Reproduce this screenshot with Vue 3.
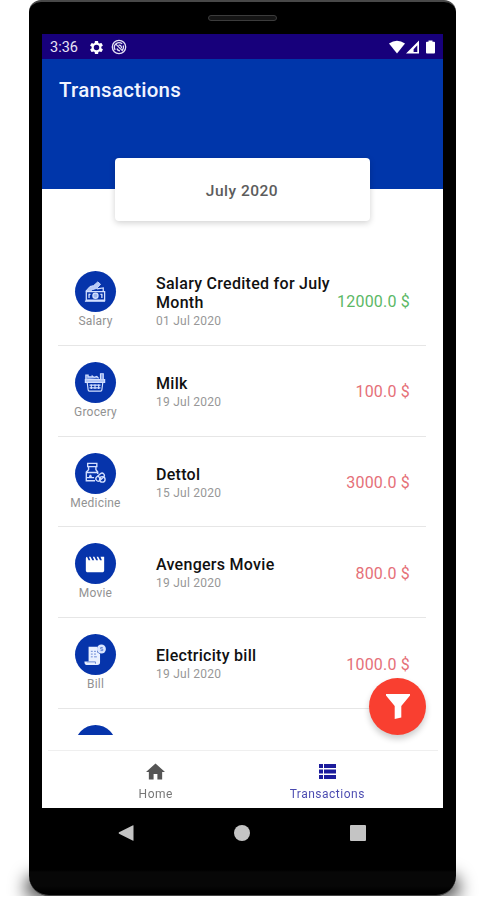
<script setup>
import { ref } from 'vue';

const activeTab = ref('transactions');
const month = ref('July 2020');

const transactions = ref([
  { id: 1, category: 'Salary', title: 'Salary Credited for July Month', date: '01 Jul 2020', amount: '12000.0 $', income: true },
  { id: 2, category: 'Grocery', title: 'Milk', date: '19 Jul 2020', amount: '100.0 $' },
  { id: 3, category: 'Medicine', title: 'Dettol', date: '15 Jul 2020', amount: '3000.0 $' },
  { id: 4, category: 'Movie', title: 'Avengers Movie', date: '19 Jul 2020', amount: '800.0 $' },
  { id: 5, category: 'Bill', title: 'Electricity bill', date: '19 Jul 2020', amount: '1000.0 $' },
  { id: 6 },
]);
</script>

<template>
  <main class="stage">
    <div class="phone-shadow"></div>
    <div class="phone">
      <div class="top-bezel"><span class="speaker"></span></div>

      <div class="screen">
        <div class="status-bar">
          <span class="clock">3:36</span>
          <svg class="status-gear" viewBox="2 2 20 20">
            <path fill="#fff" fill-rule="evenodd" d="M19.4 13a7.500 7.500 0 0 0 0-2l2.100-1.650a.5.5 0 0 0 .12-.64l-2-3.460a.5.5 0 0 0-.61-.22l-2.490 1a7.300 7.300 0 0 0-1.690-.98l-.38-2.650A.5.5 0 0 0 14 2h-4a.5.5 0 0 0-.49.42l-.38 2.650c-.61.25-1.170.59-1.690.98l-2.490-1a.5.5 0 0 0-.61.22l-2 3.460a.5.5 0 0 0 .12.64L4.600 11a7.500 7.500 0 0 0 0 2l-2.110 1.650a.5.5 0 0 0-.12.64l2 3.460c.12.22.39.3.61.22l2.490-1c.52.4 1.080.73 1.690.98l.38 2.650c.03.24.24.42.49.42h4c.25 0 .46-.18.49-.42l.38-2.650c.61-.25 1.170-.59 1.690-.98l2.490 1c.23.09.49 0 .61-.22l2-3.460a.5.5 0 0 0-.12-.64zM12 16.200a4.200 4.200 0 1 1 0-8.400 4.200 4.200 0 0 1 0 8.400z" />
          </svg>
          <svg class="status-app" viewBox="0 0 16 16" fill="none" stroke="#e6e2f5">
            <circle cx="8" cy="8" r="6.700" stroke-width="1.300" />
            <path d="M4.200 11a4.600 4.600 0 0 1 0-5.500q3-3.500 7 -.8M12.300 6.500q.8 3-1.300 5M4.800 5.200l7 7M6 9.500q.5 2.300 3 2.300M7.500 6.300q3-.6 3 3" stroke-width="1.200" />
          </svg>
          <svg class="status-right" viewBox="0 0 46 15">
            <path fill="#fff" d="M0 3.600Q8 -2.200 16 3.600L8 13.400z" />
            <path fill="#fff" fill-rule="evenodd" d="M30 .6V13.500H17zM28.300 5.300l-3.700 3.900v2.700h3.700z" />
            <path fill="#fff" d="M39.500 .5h4v1.200h1.600q.9 0 .9.9v10q0 .9-.9.9h-7.200q-.9 0-.9-.9v-10q0-.9.9-.9h1.600z" />
          </svg>
        </div>

        <header class="header">
          <h1 class="title">Transactions</h1>
        </header>

        <button class="month-card">{{ month }}</button>

        <section class="list">
          <article v-for="item in transactions" :key="item.id" class="row">
            <div class="category">
              <div class="badge">
                <svg v-if="item.category === 'Salary'" viewBox="0 0 24 24" fill="none" stroke="#d3e0ff" stroke-width="1.400">
                  <path d="M2.500 11.500h20v9.500h-20z" />
                  <path d="M1 22h22" />
                  <circle cx="12.500" cy="16" r="2.800" fill="#9db7ef" />
                  <path d="M5.500 14v4.500M19.500 14v4.500M7 14l-2 2M18 14l2 2" />
                  <path d="M2 11l4.500-5 4-1 4.500-4 3 2.500-4 4.500-5 1.500-2.500 2z" fill="#b7caf6" stroke-width="1" />
                  <path d="M14 8.500l7-1v3.500" />
                </svg>
                <svg v-else-if="item.category === 'Grocery'" viewBox="0 0 24 24" fill="none" stroke="#d3e0ff" stroke-width="1.300">
                  <path d="M1.500 9.500h21v3h-21z" fill="#a8bff2" />
                  <path d="M3.500 12.500l1 8q0 1.500 1.500 1.500h12q1.500 0 1.500-1.500l1-8M6 15.500h12M6 18.500h12M8 14.500v5M12 14.500v5M16 14.500v5" />
                  <path d="M2 9V4.500h2.500v2H9V5.500l2 1.500 3-1 2 2M18 9V3h3v6" fill="#7d9ce4" />
                </svg>
                <svg v-else-if="item.category === 'Medicine'" viewBox="0 0 24 24" fill="none" stroke="#d3e0ff" stroke-width="1.500">
                  <path d="M4 1.500h10v3.500H4zM5 5v3.500L2.500 11v9.500h9.500M13 5v3.500l2 2.500v2M2.500 11.500H15" />
                  <path d="M2.500 17H11M7 14v3M5.500 15.500h3" />
                  <rect x="12.500" y="14.500" width="10.500" height="5" rx="2.500" transform="rotate(-42 17 17)" />
                  <path d="M15 15l4 4" />
                  <circle cx="20" cy="19" r="3" />
                </svg>
                <svg v-else-if="item.category === 'Movie'" viewBox="0 0 24 24">
                  <path fill="#fff" d="M18 4l1.500 4h-2l-2-4h-1.700l1.500 4h-2l-2-4H9.600l1.500 4h-2l-2-4H5.400l1.500 4H5L3.300 4Q2 4.200 2 6v13c0 1.100.9 2 2 2h16c1.100 0 2-.9 2-2V4z" />
                </svg>
                <svg v-else-if="item.category === 'Bill'" viewBox="0 0 24 24">
                  <path fill="#e9f0ff" d="M5 3h9.500v6l3 2V20q0 3-3 3H4q-3.500 0-3.500-3.500v-.5H5z" />
                  <circle cx="19" cy="5.500" r="4.900" fill="#dbe6ff" />
                  <path fill="none" stroke="#5f80d2" stroke-width="1" d="M7.500 8h2M11 8h2M7.500 11h2M11 11h2M7.500 14h2M11 14h3M3 19.500h9.500v2M20.500 3.800h-2.300v1.700h2.300v1.700H18" />
                </svg>
              </div>
              <span class="category-name">{{ item.category }}</span>
            </div>
            <div class="details">
              <span class="name">{{ item.title }}</span>
              <span class="date">{{ item.date }}</span>
            </div>
            <span :class="['amount', { income: item.income }]">{{ item.amount }}</span>
          </article>
        </section>

        <button class="filter-btn" aria-label="Filter">
          <svg viewBox="0 0 24 25"><path fill="#fff" d="M0 0h24v1.500L15.300 12v11.500L8.700 25V12L0 1.500z" /></svg>
        </button>

        <nav class="tabs">
          <button :class="['tab', { active: activeTab === 'home' }]" @click="activeTab = 'home'">
            <svg class="home-icon" viewBox="2 3 20 17"><path fill="currentColor" d="M10 20v-6h4v6h5v-8h3L12 3 2 12h3v8z" /></svg>
            <span>Home</span>
          </button>
          <button :class="['tab', { active: activeTab === 'transactions' }]" @click="activeTab = 'transactions'">
            <svg class="list-icon" viewBox="0 0 17 15">
              <path fill="currentColor" d="M0 0h4v4H0zM5 0h12v4H5zM0 5.500h4v4H0zM5 5.500h12v4H5zM0 11h4v4H0zM5 11h12v4H5z" />
            </svg>
            <span>Transactions</span>
          </button>
        </nav>
      </div>

      <div class="system-nav">
        <svg viewBox="0 0 16 17"><path fill="#c4c4c4" d="M16 .8v15.400q0 .8-1 .4L.6 9.200q-1-.7 0-1.400L15 .4q1-.4 1 .4z" /></svg>
        <svg viewBox="0 0 16 16"><circle cx="8" cy="8" r="8" fill="#c4c4c4" /></svg>
        <svg viewBox="0 0 16 16"><rect width="16" height="16" rx="1" fill="#c4c4c4" /></svg>
      </div>
    </div>
  </main>
</template>

<style>
body {
  background: #fff;
}
</style>

<style scoped>
.stage {
  position: relative;
  width: 483px;
  height: 900px;
  overflow: hidden;
  font-family: Roboto, "Liberation Sans", sans-serif;
}

button {
  border: none;
  padding: 0;
  font-family: inherit;
  cursor: pointer;
}

/* soft shadow on the floor, visible beside the bottom corners */
.phone-shadow {
  position: absolute;
  left: 27px;
  right: 25px;
  bottom: 4px;
  height: 20px;
  border-radius: 10px 10px 0 0;
  background: rgba(0, 0, 0, 0.9);
  filter: blur(9px);
  clip-path: inset(-30px -30px 0 -30px);
}

.phone {
  position: relative;
  box-sizing: border-box;
  width: 427px;
  height: 896px;
  margin-left: 29px;
  padding: 0 13px;
  background: linear-gradient(#000 868px, #070707 870px, #070707 884px, #000 890px);
  border-top: 2px solid #484848;
  border-bottom: 1px solid #444;
  border-radius: 12px 12px 20px 20px;
}

.top-bezel {
  height: 32px;
  display: flex;
  justify-content: center;
  align-items: center;
}

.speaker {
  width: 69px;
  height: 6px;
  box-sizing: border-box;
  border: 1px solid #3c3c3c;
  border-radius: 3px;
  background: #151515;
}

.screen {
  position: relative;
  height: 774px;
  display: flex;
  flex-direction: column;
  background: #fff;
}

.status-bar {
  height: 25px;
  flex: none;
  box-sizing: border-box;
  display: flex;
  align-items: center;
  padding: 1px 8px 0;
  background: #17007b;
}

.clock {
  width: 40px;
  font-size: 14.500px;
  color: #e8e4f6;
}

.status-gear {
  width: 13px;
  height: 13px;
}

.status-app {
  width: 16px;
  height: 16px;
  margin-left: 8px;
}

.status-right {
  width: 46px;
  height: 15px;
  margin-left: auto;
}

.header {
  height: 130px;
  flex: none;
  box-sizing: border-box;
  padding: 19px 17px;
  background: #0036aa;
}

.title {
  margin: 0;
  font-size: 20.500px;
  line-height: 24px;
  font-weight: 500;
  letter-spacing: 0.25px;
  color: #f1f4ff;
}

.month-card {
  flex: none;
  align-self: center;
  box-sizing: border-box;
  width: 255px;
  height: 63px;
  margin-top: -31px;
  margin-right: 1px;
  padding-top: 2px;
  z-index: 1;
  border-radius: 4px;
  background: #fff;
  box-shadow: 0 2px 6px rgba(0, 0, 0, 0.18);
  font-size: 15.500px;
  font-weight: 500;
  letter-spacing: 0.5px;
  color: #5c5c5c;
}

.list {
  flex: none;
  height: 480px;
  margin: 34px 17px 0 16px;
  overflow: hidden;
}

.row {
  height: 90.750px;
  box-sizing: border-box;
  display: grid;
  grid-template-columns: 98px 176px 1fr;
  padding: 16px 16px 0 0;
  border-bottom: 1.500px solid #e6e6e6;
}

.category {
  width: 74px;
  display: flex;
  flex-direction: column;
  align-items: center;
}

.badge {
  width: 41px;
  height: 41px;
  border-radius: 50%;
  display: flex;
  justify-content: center;
  align-items: center;
  background: #0634ab;
}

.badge svg {
  width: 22px;
  height: 22px;
}

.category-name {
  margin-top: 2px;
  margin-left: 1px;
  font-size: 12px;
  line-height: 14px;
  letter-spacing: 0.2px;
  color: #929292;
}

.details {
  height: 61px;
  display: flex;
  flex-direction: column;
  justify-content: center;
}

.name {
  font-size: 16px;
  line-height: 19px;
  font-weight: 500;
  letter-spacing: 0.28px;
  color: #111;
}

.date {
  margin-top: 1px;
  font-size: 12px;
  line-height: 17px;
  letter-spacing: 0.25px;
  color: #979797;
}

.amount {
  height: 60px;
  display: flex;
  align-items: center;
  justify-content: flex-end;
  white-space: nowrap;
  font-size: 16px;
  letter-spacing: 0.2px;
  color: #e57078;
}

.amount.income {
  color: #5bb865;
}

.filter-btn {
  position: absolute;
  right: 17px;
  bottom: 73px;
  width: 57px;
  height: 57px;
  display: flex;
  justify-content: center;
  align-items: center;
  border-radius: 50%;
  background: #f93f30;
  box-shadow: 0 4px 6px rgba(0, 0, 0, 0.2);
}

.filter-btn svg {
  width: 24px;
  height: 25px;
}

.tabs {
  height: 58px;
  box-sizing: border-box;
  margin: auto 5px 0 6px;
  padding: 0 25px 0 22px;
  display: flex;
  border-top: 1px solid #efefef;
}

.tab {
  flex: 1;
  display: flex;
  flex-direction: column;
  align-items: center;
  background: none;
  font-size: 12px;
  line-height: 14px;
  letter-spacing: 0.5px;
  color: #555;
}

.tab span {
  margin-top: auto;
  margin-bottom: 7px;
  opacity: 0.8;
}

.tab.active {
  color: #1c1c9c;
}

.home-icon {
  width: 19px;
  height: 17px;
  margin-top: 12px;
}

.list-icon {
  width: 17px;
  height: 15px;
  margin-top: 13px;
}

.system-nav {
  height: 50px;
  display: flex;
  align-items: center;
  justify-content: space-between;
  padding: 0 77px 0 76px;
}

.system-nav svg {
  width: 16px;
  height: 16px;
}
</style>
